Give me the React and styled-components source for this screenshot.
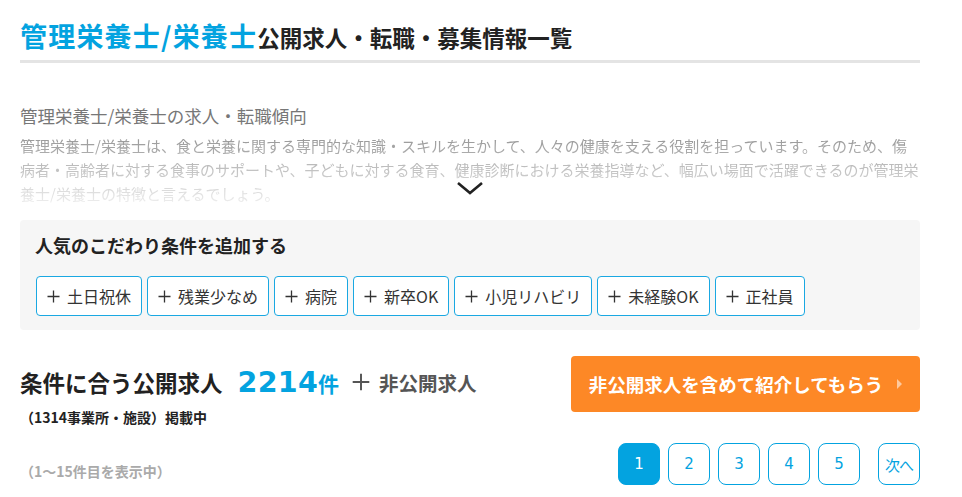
import React from "react";
import styled, { createGlobalStyle } from "styled-components";

const GlobalStyle = createGlobalStyle`
  body {
    margin: 0;
    background: #fff;
    font-family: "Noto Sans CJK JP", "Noto Sans", sans-serif;
    color: #222;
  }
`;

const blue = "#03a3e0";

const Page = styled.div`
  width: 900px;
  margin: 0 0 0 20px;
`;

const Title = styled.h1`
  margin: 0;
  padding: 16px 0 4px;
  height: 40px;
  line-height: 40px;
  border-bottom: 3px solid #e4e4e4;
  font-weight: 700;
  font-size: 22.5px;
  color: #222;
  white-space: nowrap;
`;

const TitleAccent = styled.span`
  color: ${blue};
  font-size: 27px;
  letter-spacing: 1.2px;
`;

const Trend = styled.section`
  position: relative;
  margin-top: 41px;
`;

const TrendHeading = styled.h2`
  margin: 0;
  font-size: 17.5px;
  line-height: 24px;
  font-weight: 400;
  color: #777;
`;

const TrendText = styled.p`
  margin: 6px 0 0;
  font-size: 15px;
  line-height: 24px;
  color: #888;
  height: 72px;
  overflow: hidden;
  -webkit-mask-image: linear-gradient(to bottom, rgba(0, 0, 0, 0.9), rgba(0, 0, 0, 0.12));
  mask-image: linear-gradient(to bottom, rgba(0, 0, 0, 0.9), rgba(0, 0, 0, 0.12));
`;

const MoreToggle = styled.button`
  position: absolute;
  left: 50%;
  bottom: 10px;
  transform: translateX(-50%);
  border: 0;
  background: none;
  padding: 0;
  display: flex;
  cursor: pointer;
`;

const FilterBox = styled.div`
  margin-top: 14px;
  background: #f6f6f6;
  border-radius: 4px;
  padding: 12px 16px 14px 15px;
`;

const FilterTitle = styled.h3`
  margin: 0;
  font-size: 18px;
  line-height: 26px;
  font-weight: 700;
  color: #222;
`;

const ChipRow = styled.div`
  display: flex;
  flex-wrap: wrap;
  gap: 5px;
  margin-top: 18px;
  padding-left: 1px;
`;

const Chip = styled.button`
  height: 40px;
  display: inline-flex;
  align-items: center;
  gap: 7px;
  padding: 0 10px;
  background: #fff;
  border: 1px solid #1aa8e2;
  border-radius: 4px;
  font-family: inherit;
  font-size: 16px;
  color: #333;
  cursor: pointer;
`;

const Results = styled.section`
  margin-top: 26px;
  display: grid;
  grid-template-columns: 1fr auto;
  row-gap: 16px;
`;

const CountLine = styled.div`
  display: flex;
  align-items: baseline;
  height: 44px;
  margin-top: 4px;
  white-space: nowrap;
`;

const CountLabel = styled.span`
  font-size: 22.5px;
  font-weight: 700;
  color: #222;
  line-height: 44px;
`;

const CountNumber = styled.span`
  margin-left: 15px;
  font-family: "DejaVu Sans", "Noto Sans", sans-serif;
  font-size: 28.5px;
  font-weight: 700;
  color: ${blue};
  letter-spacing: 0.3px;
`;

const CountUnit = styled.span`
  font-size: 21px;
  font-weight: 700;
  color: ${blue};
`;

const Hidden = styled.span`
  margin-left: 13px;
  font-size: 19.5px;
  font-weight: 700;
  color: #555;
  display: inline-flex;
  align-items: center;
  gap: 9px;
  align-self: center;
`;

const Plus = ({ size = 13, color = "#333", weight = 1.3 }) => (
  <svg width={size} height={size} viewBox="0 0 13 13">
    <path d="M6.5 0.5v12M0.5 6.5h12" stroke={color} strokeWidth={weight} fill="none" />
  </svg>
);

const SubNote = styled.div`
  margin-top: 3px;
  font-size: 14px;
  line-height: 20px;
  font-weight: 700;
  color: ${(p) => (p.$muted ? "#aaa" : "#222")};
`;

const ShowingNote = styled(SubNote)`
  align-self: end;
  margin: 0 0 4px;
`;

const CtaButton = styled.button`
  width: 349px;
  height: 56px;
  border: 0;
  border-radius: 4px;
  background: #fd8826;
  color: #fff;
  font-family: inherit;
  font-size: 18.5px;
  font-weight: 700;
  display: flex;
  align-items: center;
  justify-content: center;
  gap: 14px;
  cursor: pointer;
`;

const Arrow = styled.span`
  width: 0;
  height: 0;
  border-top: 5px solid transparent;
  border-bottom: 5px solid transparent;
  border-left: 5px solid rgba(255, 255, 255, 0.55);
`;

const Pager = styled.nav`
  display: flex;
  justify-content: flex-end;
  gap: 8px;
`;

const PageButton = styled.button`
  width: 42px;
  height: 42px;
  border-radius: 8px;
  border: 1px solid ${blue};
  background: ${(p) => (p.$active ? blue : "#fff")};
  color: ${(p) => (p.$active ? "#fff" : blue)};
  font-family: "DejaVu Sans", sans-serif;
  font-size: 15px;
  padding: 0;
  cursor: pointer;
  ${(p) => p.$next && `margin-left: 10px; font-family: "Noto Sans CJK JP", sans-serif; font-size: 15px; letter-spacing: -1px;`}
`;

const conditions = ["土日祝休", "残業少なめ", "病院", "新卒OK", "小児リハビリ", "未経験OK", "正社員"];

export default function App() {
  return (
    <>
      <GlobalStyle />
      <Page>
        <Title>
          <TitleAccent>管理栄養士/栄養士</TitleAccent>公開求人・転職・募集情報一覧
        </Title>

        <Trend>
          <TrendHeading>管理栄養士/栄養士の求人・転職傾向</TrendHeading>
          <TrendText>
            管理栄養士/栄養士は、食と栄養に関する専門的な知識・スキルを生かして、人々の健康を支える役割を担っています。そのため、傷病者・高齢者に対する食事のサポートや、子どもに対する食育、健康診断における栄養指導など、幅広い場面で活躍できるのが管理栄養士/栄養士の特徴と言えるでしょう。
          </TrendText>
          <MoreToggle aria-label="もっと見る">
            <svg width="28" height="16" viewBox="0 0 28 16">
              <path d="M2 3l12 10L26 3" stroke="#222" strokeWidth="2.6" fill="none" />
            </svg>
          </MoreToggle>
        </Trend>

        <FilterBox>
          <FilterTitle>人気のこだわり条件を追加する</FilterTitle>
          <ChipRow>
            {conditions.map((c) => (
              <Chip key={c}>
                <Plus />
                {c}
              </Chip>
            ))}
          </ChipRow>
        </FilterBox>

        <Results>
          <div>
            <CountLine>
              <CountLabel>条件に合う公開求人</CountLabel>
              <CountNumber>2214</CountNumber>
              <CountUnit>件</CountUnit>
              <Hidden>
                <Plus size={18} color="#555" weight={1.4} />
                非公開求人
              </Hidden>
            </CountLine>
            <SubNote>（1314事業所・施設）掲載中</SubNote>
          </div>
          <CtaButton>
            非公開求人を含めて紹介してもらう
            <Arrow />
          </CtaButton>
          <ShowingNote $muted>（1～15件目を表示中）</ShowingNote>
          <Pager>
            {[1, 2, 3, 4, 5].map((n) => (
              <PageButton key={n} $active={n === 1}>
                {n}
              </PageButton>
            ))}
            <PageButton $next>次へ</PageButton>
          </Pager>
        </Results>
      </Page>
    </>
  );
}
